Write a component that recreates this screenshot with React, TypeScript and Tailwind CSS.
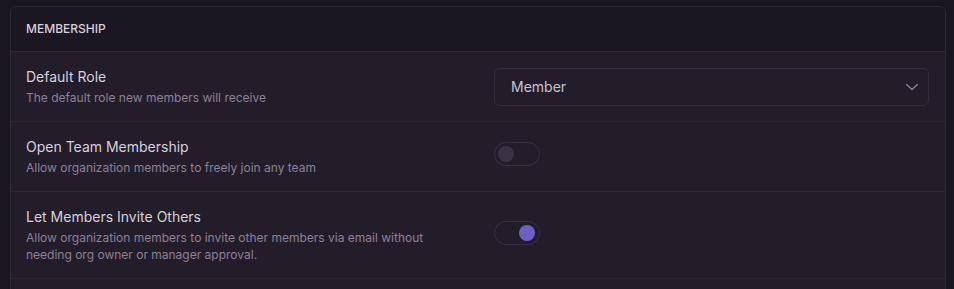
import React, { useState } from 'react';

const font = { fontFamily: 'Inter, "Noto Sans", sans-serif' };

interface ToggleProps {
  on: boolean;
  onChange: (v: boolean) => void;
}

const Toggle: React.FC<ToggleProps> = ({ on, onChange }) => (
  <button
    onClick={() => onChange(!on)}
    className="relative w-[46px] h-[24px] rounded-full border border-[#3a3142] bg-transparent"
  >
    <span
      className={`absolute top-[3px] w-[16px] h-[16px] rounded-full ${
        on ? 'left-[24px] bg-[#6c5fc7]' : 'left-[3px] bg-[#3b3343]'
      }`}
    />
  </button>
);

interface FieldProps {
  label: string;
  help: React.ReactNode;
  children: React.ReactNode;
}

const Field: React.FC<FieldProps> = ({ label, help, children }) => (
  <div className="flex items-center pl-[15px] pr-4 py-[15px] border-b border-[#2c2532]">
    <div className="w-[468px] shrink-0 pr-4">
      <div className="text-[14px] leading-5 text-[#d6d0dc]">{label}</div>
      <div className="mt-[2px] text-[12px] leading-[17px] text-[#8c8196] max-w-[400px]">{help}</div>
    </div>
    <div className="flex-1">{children}</div>
  </div>
);

export default function App() {
  const [openTeam, setOpenTeam] = useState(false);
  const [invite, setInvite] = useState(true);

  return (
    <div className="w-[954px] h-[289px] bg-[#1a1620] pt-[6px] overflow-hidden" style={font}>
      <div className="ml-[10px] w-[936px] h-[300px] rounded-md border border-[#2f2836] bg-[#221d29] overflow-hidden">
        {/* Header */}
        <div className="pl-[15px] pr-4 py-[14px] bg-[#1a1720] border-b border-[#2f2836]">
          <div className="text-[12px] leading-4 font-medium uppercase text-[#d6d0dc]">Membership</div>
        </div>

        <Field label="Default Role" help="The default role new members will receive">
          <div className="flex items-center justify-between h-[38px] pl-4 pr-[8px] rounded-md border border-[#342c3b] text-[14px] text-[#c9c2d0]">
            <span>Member</span>
            <svg width="16" height="16" viewBox="0 0 16 16" fill="none" stroke="#8b7f96" strokeWidth="1.3" strokeLinecap="round" strokeLinejoin="round">
              <path d="M2.5 5.5L8 10.5L13.5 5.5" />
            </svg>
          </div>
        </Field>

        <Field label="Open Team Membership" help="Allow organization members to freely join any team">
          <Toggle on={openTeam} onChange={setOpenTeam} />
        </Field>

        <Field
          label="Let Members Invite Others"
          help="Allow organization members to invite other members via email without needing org owner or manager approval."
        >
          <Toggle on={invite} onChange={setInvite} />
        </Field>
      </div>
    </div>
  );
}
